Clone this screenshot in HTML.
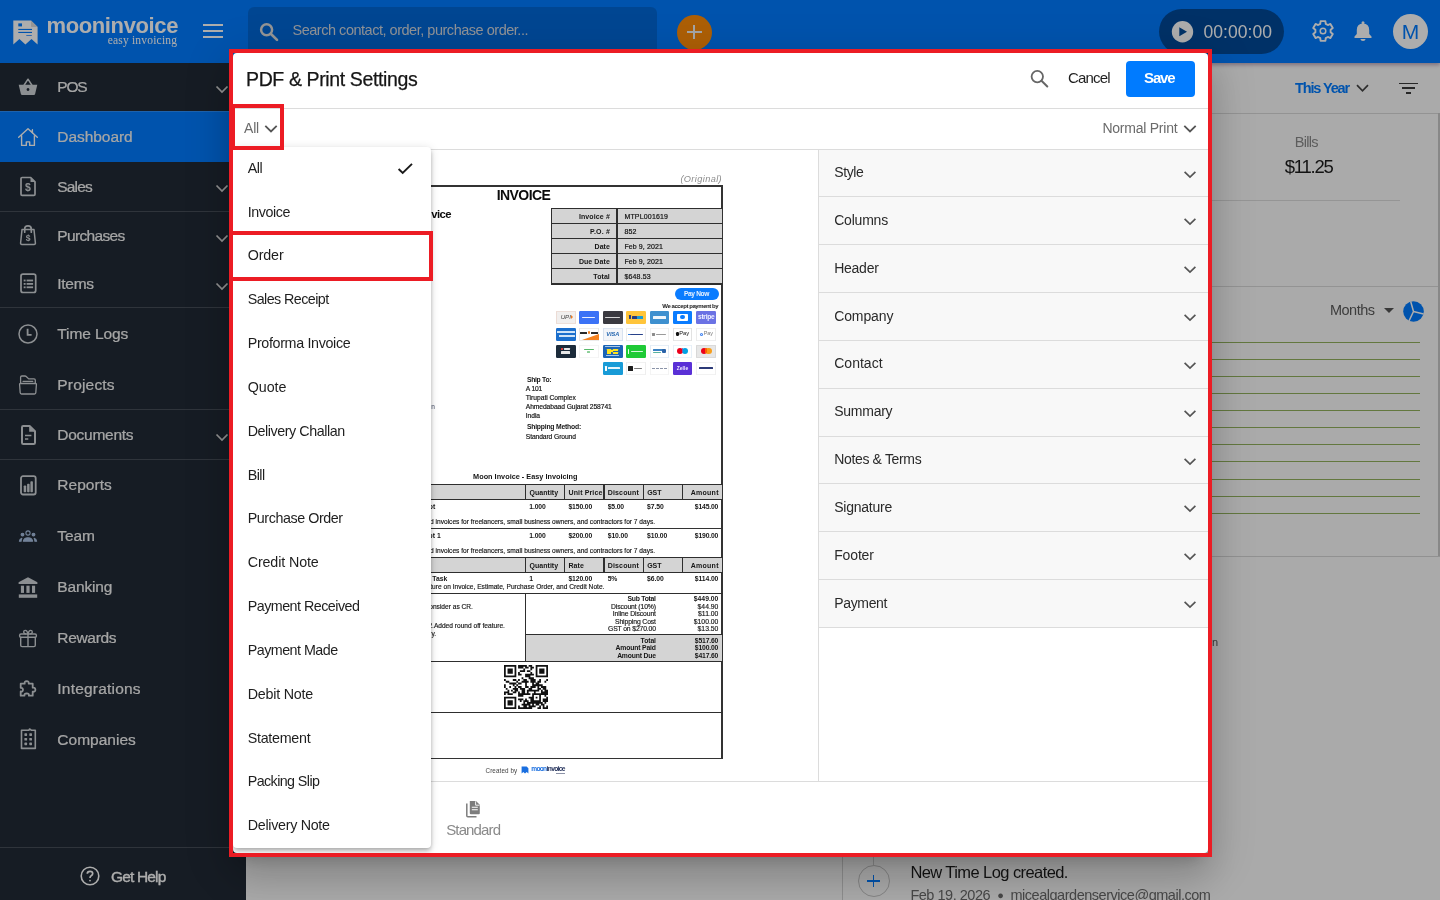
<!DOCTYPE html>
<html><head><meta charset="utf-8"><title>PDF &amp; Print Settings</title>
<style>
html,body{margin:0;padding:0;width:1440px;height:900px;overflow:hidden;background:#fbfbfb;font-family:"Liberation Sans",sans-serif}
.layer{position:absolute;left:0;top:0;width:1440px;height:900px;overflow:hidden;will-change:transform}
.t{position:absolute;white-space:pre;display:block}
</style></head><body>
<div class="layer" id="app" style="z-index:1">
<div style="position:absolute;left:0;top:0;width:1440px;height:63px;background:#007bff;box-shadow:0 2px 4px rgba(60,0,60,.35)"></div>
<svg style="position:absolute;left:12px;top:19px" width="28" height="28" viewBox="12 19 28 28">
<path d="M13.3 20.4 H31 L37.6 27 V44.6 L31.5 39 L25.4 44.6 L19.4 39 L13.3 44.6 Z" fill="#fff"/>
<path d="M31 20.4 L37.6 27 H31.8 Q31 27 31 26.2 Z" fill="#dcdcdc"/>
<rect x="18.3" y="23.4" width="3.7" height="3" fill="#007bff"/>
<rect x="18.3" y="28.9" width="13.7" height="1.1" fill="#007bff"/>
<rect x="18.3" y="31.9" width="13.7" height="1.1" fill="#007bff"/>
<rect x="26.3" y="35" width="5.5" height="1" fill="#4a9bff"/>
</svg>
<span class="t" style="top:15.39px;font:normal 700 22px/1 'Liberation Sans',sans-serif;color:#fff;left:46.50px;letter-spacing:-0.381px;">mooninvoice</span>
<span class="t" style="top:35.20px;font:normal 400 11.5px/1 'Liberation Serif',sans-serif;color:#fff;left:107.70px;letter-spacing:0.196px;">easy invoicing</span>
<div style="position:absolute;left:202.5px;top:23.8px;width:20px;height:2px;background:#fff"></div>
<div style="position:absolute;left:202.5px;top:30px;width:20px;height:2px;background:#fff"></div>
<div style="position:absolute;left:202.5px;top:36.2px;width:20px;height:2px;background:#fff"></div>
<div style="position:absolute;left:248px;top:7px;width:409px;height:48px;border-radius:6px;background:rgba(0,0,0,.155)"></div>
<svg style="position:absolute;left:258px;top:21px" width="22" height="22" viewBox="258 21 22 22">
<circle cx="266.6" cy="29.7" r="5.5" fill="none" stroke="#dcdcdc" stroke-width="2.5"/>
<path d="M271 34 L277 39.900" stroke="#dcdcdc" stroke-width="2.700" stroke-linecap="round"/></svg>
<span class="t" style="top:23.22px;font:normal 400 14.5px/1 'Liberation Sans',sans-serif;color:#d4d8de;left:292.50px;letter-spacing:-0.480px;">Search contact, order, purchase order...</span>
<div style="position:absolute;left:676.5px;top:14.5px;width:35px;height:35px;border-radius:50%;background:#ff8c0a"></div>
<div style="position:absolute;left:687px;top:31px;width:14.5px;height:2px;background:#f4f4f4"></div>
<div style="position:absolute;left:693.2px;top:24.7px;width:2px;height:14.5px;background:#f4f4f4"></div>
<div style="position:absolute;left:1159px;top:9px;width:124.5px;height:45px;border-radius:23px;background:rgba(0,0,0,.4)"></div>
<svg style="position:absolute;left:1171px;top:20px" width="24" height="24" viewBox="1171 20 24 24">
<circle cx="1182.5" cy="31.7" r="10.7" fill="#fff"/><path d="M1179.3 27.2 L1187 31.7 L1179.3 36.2 Z" fill="#004a99"/></svg>
<span class="t" style="top:23.85px;font:normal 400 17.5px/1 'Liberation Sans',sans-serif;color:#fff;left:1203.50px;letter-spacing:0.047px;">00:00:00</span>
<svg style="position:absolute;left:1309px;top:16.900px" width="28" height="28" viewBox="-14 -14 28 28" fill="none" stroke="#fff" stroke-width="1.900" stroke-linejoin="round">
<path d="M2.76 -7.19 L2.38 -9.92 L-2.38 -9.92 L-2.76 -7.19 L-4.85 -5.98 L-7.40 -7.02 L-9.78 -2.90 L-7.61 -1.20 L-7.61 1.20 L-9.78 2.90 L-7.40 7.02 L-4.85 5.98 L-2.76 7.19 L-2.38 9.92 L2.38 9.92 L2.76 7.19 L4.85 5.98 L7.40 7.02 L9.78 2.90 L7.61 1.20 L7.61 -1.20 L9.78 -2.90 L7.40 -7.02 L4.85 -5.98 Z"/><circle r="2.800" stroke-width="1.500"/></svg>
<svg style="position:absolute;left:1351.200px;top:18.900px" width="24" height="24" viewBox="-12 -12 24 24" fill="#fff">
<path d="M-6.200 3 V-1 Q-6.200 -7.200 0 -7.400 Q6.200 -7.200 6.200 -1 V3 L8.500 5.600 V6.900 H-8.500 V5.600 Z"/><circle cx="0" cy="-8.300" r="1.500"/><path d="M-2.600 7.900 H2.600 Q2.300 10 0 10 Q-2.300 10 -2.600 7.900 Z"/></svg>
<div style="position:absolute;left:1393px;top:13.7px;width:35px;height:35px;border-radius:50%;background:#fff"></div>
<span class="t" style="top:21.34px;font:normal 400 21px/1 'Liberation Sans',sans-serif;color:#007bff;left:1401.75px;">M</span>
<div style="position:absolute;left:0;top:63px;width:246px;height:837px;background:#212a35"></div>
<div style="position:absolute;left:0;top:111px;width:246px;height:51px;background:#007bff"></div>
<div style="position:absolute;left:0;top:111px;width:246px;height:1px;background:rgba(255,255,255,.17)"></div>
<div style="position:absolute;left:0;top:210.5px;width:246px;height:1px;background:rgba(255,255,255,.17)"></div>
<div style="position:absolute;left:0;top:307px;width:246px;height:1px;background:rgba(255,255,255,.17)"></div>
<div style="position:absolute;left:0;top:409px;width:246px;height:1px;background:rgba(255,255,255,.17)"></div>
<div style="position:absolute;left:0;top:458.5px;width:246px;height:1px;background:rgba(255,255,255,.17)"></div>
<div style="position:absolute;left:0;top:847px;width:246px;height:1px;background:rgba(255,255,255,.17)"></div>
<span class="t" style="top:79.23px;font:normal 400 15.5px/1 'Liberation Sans',sans-serif;color:#f4f4f4;left:57.30px;letter-spacing:-1.178px;-webkit-text-stroke:.2px #f4f4f4;">POS</span>
<svg style="position:absolute;left:215px;top:85.0px" width="14" height="9" viewBox="0 0 14 9"><path d="M1.5 1.500 L7 7 L12.5 1.500" fill="none" stroke="#d8d8d8" stroke-width="1.7"/></svg>
<span class="t" style="top:129.13px;font:normal 400 15.5px/1 'Liberation Sans',sans-serif;color:#f4f4f4;left:57.30px;letter-spacing:-0.048px;-webkit-text-stroke:.2px #f4f4f4;">Dashboard</span>
<span class="t" style="top:178.63px;font:normal 400 15.5px/1 'Liberation Sans',sans-serif;color:#f4f4f4;left:57.30px;letter-spacing:-0.856px;-webkit-text-stroke:.2px #f4f4f4;">Sales</span>
<svg style="position:absolute;left:215px;top:184.4px" width="14" height="9" viewBox="0 0 14 9"><path d="M1.5 1.500 L7 7 L12.5 1.500" fill="none" stroke="#d8d8d8" stroke-width="1.7"/></svg>
<span class="t" style="top:227.93px;font:normal 400 15.5px/1 'Liberation Sans',sans-serif;color:#f4f4f4;left:57.30px;letter-spacing:-0.670px;-webkit-text-stroke:.2px #f4f4f4;">Purchases</span>
<svg style="position:absolute;left:215px;top:233.7px" width="14" height="9" viewBox="0 0 14 9"><path d="M1.5 1.500 L7 7 L12.5 1.500" fill="none" stroke="#d8d8d8" stroke-width="1.7"/></svg>
<span class="t" style="top:275.83px;font:normal 400 15.5px/1 'Liberation Sans',sans-serif;color:#f4f4f4;left:57.30px;letter-spacing:-0.281px;-webkit-text-stroke:.2px #f4f4f4;">Items</span>
<svg style="position:absolute;left:215px;top:281.6px" width="14" height="9" viewBox="0 0 14 9"><path d="M1.5 1.500 L7 7 L12.5 1.500" fill="none" stroke="#d8d8d8" stroke-width="1.7"/></svg>
<span class="t" style="top:326.43px;font:normal 400 15.5px/1 'Liberation Sans',sans-serif;color:#f4f4f4;left:57.30px;letter-spacing:-0.089px;-webkit-text-stroke:.2px #f4f4f4;">Time Logs</span>
<span class="t" style="top:376.83px;font:normal 400 15.5px/1 'Liberation Sans',sans-serif;color:#f4f4f4;left:57.30px;letter-spacing:0.188px;-webkit-text-stroke:.2px #f4f4f4;">Projects</span>
<span class="t" style="top:426.83px;font:normal 400 15.5px/1 'Liberation Sans',sans-serif;color:#f4f4f4;left:57.30px;letter-spacing:-0.267px;-webkit-text-stroke:.2px #f4f4f4;">Documents</span>
<svg style="position:absolute;left:215px;top:432.6px" width="14" height="9" viewBox="0 0 14 9"><path d="M1.5 1.500 L7 7 L12.5 1.500" fill="none" stroke="#d8d8d8" stroke-width="1.7"/></svg>
<span class="t" style="top:477.43px;font:normal 400 15.5px/1 'Liberation Sans',sans-serif;color:#f4f4f4;left:57.30px;letter-spacing:0.031px;-webkit-text-stroke:.2px #f4f4f4;">Reports</span>
<span class="t" style="top:528.43px;font:normal 400 15.5px/1 'Liberation Sans',sans-serif;color:#f4f4f4;left:57.30px;letter-spacing:-0.102px;-webkit-text-stroke:.2px #f4f4f4;">Team</span>
<span class="t" style="top:579.43px;font:normal 400 15.5px/1 'Liberation Sans',sans-serif;color:#f4f4f4;left:57.30px;letter-spacing:-0.145px;-webkit-text-stroke:.2px #f4f4f4;">Banking</span>
<span class="t" style="top:629.93px;font:normal 400 15.5px/1 'Liberation Sans',sans-serif;color:#f4f4f4;left:57.30px;letter-spacing:-0.310px;-webkit-text-stroke:.2px #f4f4f4;">Rewards</span>
<span class="t" style="top:680.93px;font:normal 400 15.5px/1 'Liberation Sans',sans-serif;color:#f4f4f4;left:57.30px;letter-spacing:0.208px;-webkit-text-stroke:.2px #f4f4f4;">Integrations</span>
<span class="t" style="top:731.93px;font:normal 400 15.5px/1 'Liberation Sans',sans-serif;color:#f4f4f4;left:57.30px;letter-spacing:0.010px;-webkit-text-stroke:.2px #f4f4f4;">Companies</span>
<svg style="position:absolute;left:16px;top:74.50px" width="24" height="24" viewBox="0 0 24 24" fill="none" stroke="#cfd3d7" stroke-width="1.5" stroke-linejoin="round" stroke-linecap="round"><path d="M2.700 9.700 H21.300 L19.100 19 Q18.900 20 17.900 20 H6.100 Q5.100 20 4.900 19 Z M12 13.100 a1.400 1.400 0 1 0 .01 0 Z" fill="#cfd3d7" stroke="none" fill-rule="evenodd"/><path d="M8.200 10 L12 4.200 L15.800 10" stroke-width="1.500"/></svg>
<svg style="position:absolute;left:16px;top:124.60px" width="24" height="24" viewBox="0 0 24 24" fill="none" stroke="#cfd3d7" stroke-width="1.5" stroke-linejoin="round" stroke-linecap="round"><path d="M2.700 12.300 L12 3.700 L21.300 12.300" stroke="#fff" stroke-width="1.4"/><path d="M5.600 10.700 V20.400 H10.300 V16.900 H13.700 V20.400 H18.400 V10.700" stroke="#fff" stroke-width="1.400"/><path d="M15.600 6.900 L16.500 4.500 L16.600 7.900" stroke="#fff" stroke-width="1.100"/></svg>
<svg style="position:absolute;left:16px;top:174.30px" width="24" height="24" viewBox="0 0 24 24" fill="none" stroke="#cfd3d7" stroke-width="1.5" stroke-linejoin="round" stroke-linecap="round"><path d="M5 4.600 Q5 3.500 6.100 3.500 H14.700 L19 7.800 V20.200 Q19 21.300 17.900 21.300 H6.100 Q5 21.300 5 20.200 Z" stroke-width="1.700"/><path d="M14.500 3.700 V8 H18.800 Z" fill="#cfd3d7" stroke="none"/><text x="11.900" y="17.300" text-anchor="middle" font-family="Liberation Sans" font-weight="700" font-size="10.500" fill="#cfd3d7" stroke="none">$</text></svg>
<svg style="position:absolute;left:16px;top:223.40px" width="24" height="24" viewBox="0 0 24 24" fill="none" stroke="#cfd3d7" stroke-width="1.5" stroke-linejoin="round" stroke-linecap="round"><path d="M6 6.600 H18 L19.400 20 Q19.500 21.400 18.100 21.400 H5.900 Q4.500 21.400 4.600 20 Z" stroke-width="1.500"/><path d="M8.700 9.200 V6.200 Q8.700 2.900 12 2.900 Q15.300 2.900 15.300 6.200 V9.200" stroke-width="1.700"/><text x="12.100" y="18.300" text-anchor="middle" font-family="Liberation Sans" font-weight="700" font-size="8.500" fill="#cfd3d7" stroke="none">$</text></svg>
<svg style="position:absolute;left:16px;top:271.20px" width="24" height="24" viewBox="0 0 24 24" fill="none" stroke="#cfd3d7" stroke-width="1.5" stroke-linejoin="round" stroke-linecap="round"><rect x="5" y="3.100" width="14.700" height="18.400" rx="2" stroke-width="1.700"/><g fill="#cfd3d7" stroke="none"><rect x="7.700" y="8.600" width="1.900" height="1.800"/><rect x="10.600" y="8.600" width="6.500" height="1.800"/><rect x="7.700" y="12" width="1.900" height="1.800"/><rect x="10.600" y="12" width="6.500" height="1.800"/><rect x="7.700" y="15.400" width="1.900" height="1.800"/><rect x="10.600" y="15.400" width="6.500" height="1.800"/></g></svg>
<svg style="position:absolute;left:16px;top:321.70px" width="24" height="24" viewBox="0 0 24 24" fill="none" stroke="#cfd3d7" stroke-width="1.5" stroke-linejoin="round" stroke-linecap="round"><circle cx="12" cy="12" r="9" stroke-width="1.500"/><path d="M11.600 6.700 V12.800 H15.600" stroke-width="1.800" stroke-linecap="butt" stroke-linejoin="miter"/></svg>
<svg style="position:absolute;left:16px;top:373.00px" width="24" height="24" viewBox="0 0 24 24" fill="none" stroke="#cfd3d7" stroke-width="1.5" stroke-linejoin="round" stroke-linecap="round"><path d="M4.600 10.300 V4.300 Q4.600 3 5.900 3 H9 Q9.700 3 10.200 3.500 L12.700 5.900 H18 Q19.300 5.900 19.300 7.200 V10.300" stroke-width="1.300"/><path d="M7 8.300 H16.800" stroke-width="1.300"/><path d="M4.500 10.500 H19.500 Q20.500 10.500 20.400 11.500 L19.800 19.800 Q19.700 21 18.500 21 H5.500 Q4.300 21 4.200 19.800 L3.600 11.500 Q3.500 10.500 4.500 10.500 Z" stroke-width="1.300"/></svg>
<svg style="position:absolute;left:16px;top:422.60px" width="24" height="24" viewBox="0 0 24 24" fill="none" stroke="#cfd3d7" stroke-width="1.5" stroke-linejoin="round" stroke-linecap="round"><path d="M6 4.300 Q6 3 7.300 3 H13.600 L19 8.300 V19.700 Q19 21 17.700 21 H7.300 Q6 21 6 19.700 Z" stroke-width="2"/><path d="M13.200 3.300 V8.700 H18.700 Z" fill="#cfd3d7" stroke="none"/><path d="M9 12.500 H15.400 M9 16 H12.300" stroke-width="1.700" stroke-linecap="butt"/></svg>
<svg style="position:absolute;left:16px;top:473.30px" width="24" height="24" viewBox="0 0 24 24" fill="none" stroke="#cfd3d7" stroke-width="1.5" stroke-linejoin="round" stroke-linecap="round"><rect x="5" y="3.200" width="14.700" height="18.300" rx="2" stroke-width="1.800"/><g fill="#cfd3d7" stroke="none"><rect x="7.700" y="12.500" width="2.500" height="6.700" rx=".8"/><rect x="11.100" y="10.800" width="2.500" height="8.400" rx=".8"/><rect x="14.400" y="8.200" width="2.500" height="11" rx=".8"/></g></svg>
<svg style="position:absolute;left:16px;top:524.00px" width="24" height="24" viewBox="0 0 24 24" fill="none" stroke="#cfd3d7" stroke-width="1.5" stroke-linejoin="round" stroke-linecap="round"><g stroke-width="1.100" stroke="#a9c0e2"><circle cx="12" cy="9" r="2.100"/><path d="M7.400 17.200 Q7.900 13.800 12 13.800 Q16.100 13.800 16.600 17.200 Z" fill="#a9c0e2"/><circle cx="6.500" cy="10.600" r="1.400" fill="#a9c0e2"/><circle cx="17.500" cy="10.600" r="1.400" fill="#a9c0e2"/><path d="M3.400 17.200 Q3.600 14.700 5.800 14.200 Q5.200 15.600 5.100 17.200 Z M20.600 17.200 Q20.400 14.700 18.200 14.200 Q18.800 15.600 18.900 17.200 Z" fill="#a9c0e2"/></g></svg>
<svg style="position:absolute;left:16px;top:575.20px" width="24" height="24" viewBox="0 0 24 24" fill="none" stroke="#cfd3d7" stroke-width="1.5" stroke-linejoin="round" stroke-linecap="round"><g fill="#cfd3d7" stroke="none"><path d="M12 2.200 L21.400 7.300 V8.900 H2.600 V7.300 Z"/><rect x="4.900" y="10.700" width="3.100" height="7.200"/><rect x="10.400" y="10.700" width="3.200" height="7.200"/><rect x="16" y="10.700" width="3.100" height="7.200"/><rect x="2.800" y="19.400" width="18.400" height="3.400"/></g></svg>
<svg style="position:absolute;left:16px;top:625.60px" width="24" height="24" viewBox="0 0 24 24" fill="none" stroke="#cfd3d7" stroke-width="1.5" stroke-linejoin="round" stroke-linecap="round"><rect x="3.600" y="8" width="16.800" height="3.300" rx="1.400" stroke-width="1.400"/><path d="M4.700 11.500 V19.200 Q4.700 20.600 6.100 20.600 H17.900 Q19.300 20.600 19.300 19.200 V11.500 M12 8 V20.600" stroke-width="1.400"/><path d="M11.800 7.800 Q11.300 4.300 9.400 4.300 Q7.700 4.300 7.700 6 Q7.700 7.800 9.800 7.800 M12.200 7.800 Q12.700 4.300 14.600 4.300 Q16.300 4.300 16.300 6 Q16.300 7.800 14.200 7.800" stroke-width="1.300"/></svg>
<svg style="position:absolute;left:16px;top:676.50px" width="24" height="24" viewBox="0 0 24 24" fill="none" stroke="#cfd3d7" stroke-width="1.5" stroke-linejoin="round" stroke-linecap="round"><path d="M8.700 6.700 Q8.200 4.200 10.700 4.100 Q13.100 4.200 12.700 6.700 H16.700 V10.700 Q19.300 10.200 19.400 12.700 Q19.300 15.100 16.700 14.700 V18.700 H12.900 Q13.200 16.400 10.700 16.300 Q8.200 16.400 8.500 18.700 H4.700 V14.500 Q6.900 14.800 7 12.700 Q6.900 10.600 4.700 10.900 V6.700 Z" stroke-width="1.800"/></svg>
<svg style="position:absolute;left:16px;top:727.40px" width="24" height="24" viewBox="0 0 24 24" fill="none" stroke="#cfd3d7" stroke-width="1.5" stroke-linejoin="round" stroke-linecap="round"><path d="M5.500 3.300 H12.800 L13.600 2 L15.600 3.300 H19.300 V21.400 H5.500 Z" stroke-width="1.600"/><g fill="#cfd3d7" stroke="none"><rect x="8.400" y="6.300" width="2.700" height="2.600" rx=".6"/><rect x="13.300" y="6.300" width="2.700" height="2.600" rx=".6"/><rect x="8.400" y="11" width="2.700" height="2.600" rx=".6"/><rect x="13.300" y="11" width="2.700" height="2.600" rx=".6"/><rect x="8.400" y="15.600" width="2.700" height="2.600" rx=".6"/><rect x="13.300" y="15.600" width="2.700" height="2.600" rx=".6"/></g></svg>
<svg style="position:absolute;left:78px;top:864px" width="24" height="24" viewBox="0 0 24 24" fill="none" stroke="#fff" stroke-width="1.600"><circle cx="12" cy="12" r="8.800"/><path d="M9.300 9.800 Q9.300 7.400 12 7.400 Q14.700 7.400 14.700 9.600 Q14.700 11 13.200 11.800 Q12 12.500 12 13.900" stroke-width="1.700"/><circle cx="12" cy="16.600" r=".9" fill="#fff" stroke="none"/></svg>
<span class="t" style="top:868.73px;font:normal 400 15.5px/1 'Liberation Sans',sans-serif;color:#fff;left:111.00px;letter-spacing:-0.834px;-webkit-text-stroke:.35px #fff;">Get Help</span>
<div style="position:absolute;left:246px;top:63px;width:1194px;height:837px;background:#fbfbfb;z-index:-1"></div>
<span class="t" style="top:81.12px;font:normal 700 14.5px/1 'Liberation Sans',sans-serif;color:#007bff;left:1295.00px;letter-spacing:-1.135px;">This Year</span>
<svg style="position:absolute;left:1356px;top:84px" width="13" height="9" viewBox="0 0 13 9"><path d="M1 1.200 L6.500 6.800 L12 1.200" fill="none" stroke="#444" stroke-width="1.700"/></svg>
<div style="position:absolute;left:1399px;top:82.5px;width:18.5px;height:1.7px;background:#3a3a3a"></div>
<div style="position:absolute;left:1402px;top:87.3px;width:12.5px;height:1.7px;background:#3a3a3a"></div>
<div style="position:absolute;left:1405.7px;top:92px;width:5px;height:1.7px;background:#3a3a3a"></div>
<div style="position:absolute;left:246px;top:113px;width:1193px;height:174px;border:1px solid #d9d9d9;border-left:0;box-sizing:border-box"></div>
<div style="position:absolute;left:1438px;top:113px;width:2px;height:443px;background:#c9c9c9"></div>
<span class="t" style="top:134.72px;font:normal 400 14.5px/1 'Liberation Sans',sans-serif;color:#8a8a8a;left:1294.84px;letter-spacing:-0.719px;">Bills</span>
<span class="t" style="top:157.56px;font:normal 400 18.5px/1 'Liberation Sans',sans-serif;color:#1d1d1d;left:1284.69px;letter-spacing:-1.200px;">$11.25</span>
<div style="position:absolute;left:1000px;top:200px;width:400px;height:1px;background:#dcdcdc"></div>
<span class="t" style="top:303.12px;font:normal 400 14.5px/1 'Liberation Sans',sans-serif;color:#5a5a5a;left:1330.00px;letter-spacing:-0.510px;">Months</span>
<svg style="position:absolute;left:1383px;top:307px" width="12" height="7" viewBox="0 0 12 7"><path d="M1 1 H11 L6 6 Z" fill="#555"/></svg>
<svg style="position:absolute;left:1402px;top:299.500px" width="23" height="23" viewBox="-11.500 -11.500 23 23"><circle r="10.300" fill="#007bff"/><path d="M0 0 L-2.800 -10 M0 0 L10 2.600 M0 0 L-4.500 9.400" stroke="#fff" stroke-width="1.500"/></svg>
<div style="position:absolute;left:1000px;top:342px;width:420px;height:1px;background:#92b25e"></div>
<div style="position:absolute;left:1000px;top:359px;width:420px;height:1px;background:#92b25e"></div>
<div style="position:absolute;left:1000px;top:376px;width:420px;height:1px;background:#92b25e"></div>
<div style="position:absolute;left:1000px;top:393px;width:420px;height:1px;background:#92b25e"></div>
<div style="position:absolute;left:1000px;top:410px;width:420px;height:1px;background:#92b25e"></div>
<div style="position:absolute;left:1000px;top:427px;width:420px;height:1px;background:#92b25e"></div>
<div style="position:absolute;left:1000px;top:444px;width:420px;height:1px;background:#92b25e"></div>
<div style="position:absolute;left:1000px;top:461px;width:420px;height:1px;background:#92b25e"></div>
<div style="position:absolute;left:1000px;top:479px;width:420px;height:1px;background:#92b25e"></div>
<div style="position:absolute;left:1000px;top:496px;width:420px;height:1px;background:#92b25e"></div>
<div style="position:absolute;left:1000px;top:513px;width:420px;height:1px;background:#92b25e"></div>
<div style="position:absolute;left:246px;top:555.500px;width:1194px;height:1px;background:#d6d6d6"></div>
<div style="position:absolute;left:842px;top:556px;width:1px;height:344px;background:#d2d2d2"></div>
<div style="position:absolute;left:873px;top:840px;width:1px;height:25px;background:#cfcfcf"></div>
<div style="position:absolute;left:857.500px;top:864.500px;width:32px;height:32px;border-radius:50%;border:1px solid #c4c4c4;box-sizing:border-box;background:#fbfbfb"></div>
<div style="position:absolute;left:867.300px;top:880px;width:12.500px;height:1.700px;background:#007bff"></div><div style="position:absolute;left:872.700px;top:874.600px;width:1.700px;height:12.500px;background:#007bff"></div>
<span class="t" style="top:863.74px;font:normal 400 16.5px/1 'Liberation Sans',sans-serif;color:#1c1c1c;left:910.40px;letter-spacing:-0.580px;">New Time Log created.</span>
<span class="t" style="top:888.22px;font:normal 400 14.5px/1 'Liberation Sans',sans-serif;color:#6a6a6a;left:910.40px;letter-spacing:-0.478px;">Feb 19, 2026 &nbsp;<span style="font-size:11px;position:relative;top:-1.500px">&#9679;</span>&nbsp; micealgardenservice@gmail.com</span>
<span class="t" style="top:636.63px;font:normal 400 11px/1 'Liberation Sans',sans-serif;color:#555;left:1212.00px;">n</span>
</div>
<div class="layer" id="dim" style="z-index:2;background:rgba(0,0,0,.32)"></div>
<div class="layer" id="dialog" style="z-index:3">
<div style="position:absolute;left:233px;top:53px;width:975px;height:800px;border-radius:4px;background:#fff;box-shadow:0 11px 15px -7px rgba(0,0,0,.2),0 24px 38px 3px rgba(0,0,0,.14),0 9px 46px 8px rgba(0,0,0,.12)"></div>
<span class="t" style="top:69.97px;font:normal 400 19.5px/1 'Liberation Sans',sans-serif;color:#161616;left:246.00px;letter-spacing:-0.376px;-webkit-text-stroke:.25px #161616;">PDF &amp; Print Settings</span>
<svg style="position:absolute;left:1028px;top:67px" width="22" height="22" viewBox="1028 67 22 22">
<circle cx="1037.300" cy="76.600" r="5.700" fill="none" stroke="#666" stroke-width="1.800"/><path d="M1041.500 80.800 L1047.300 86.500" stroke="#666" stroke-width="2" stroke-linecap="round"/></svg>
<span class="t" style="top:70.17px;font:normal 400 15px/1 'Liberation Sans',sans-serif;color:#1f1f1f;left:1068.00px;letter-spacing:-0.834px;">Cancel</span>
<div style="position:absolute;left:1125.500px;top:60.700px;width:69px;height:36px;border-radius:4px;background:#007bff"></div>
<span class="t" style="top:70.27px;font:normal 700 15px/1 'Liberation Sans',sans-serif;color:#fff;left:1144.08px;letter-spacing:-1.200px;">Save</span>
<div style="position:absolute;left:233px;top:107.800px;width:975px;height:1px;background:#dcdcdc"></div>
<span class="t" style="top:120.86px;font:normal 400 14px/1 'Liberation Sans',sans-serif;color:#6b6b6b;left:244.00px;letter-spacing:-0.188px;">All</span>
<svg style="position:absolute;left:264px;top:124px" width="14" height="10" viewBox="0 0 14 10"><path d="M1.300 1.800 L7 7.500 L12.700 1.800" fill="none" stroke="#555" stroke-width="1.800"/></svg>
<span class="t" style="top:120.86px;font:normal 400 14px/1 'Liberation Sans',sans-serif;color:#6b6b6b;left:1102.40px;letter-spacing:-0.233px;">Normal Print</span>
<svg style="position:absolute;left:1182.700px;top:124px" width="14" height="10" viewBox="0 0 14 10"><path d="M1.300 1.800 L7 7.500 L12.700 1.800" fill="none" stroke="#555" stroke-width="1.800"/></svg>
<div style="position:absolute;left:233px;top:148.600px;width:975px;height:1px;background:#dcdcdc"></div>
<div style="position:absolute;left:818.300px;top:149px;width:1px;height:633px;background:#dcdcdc"></div>
<div style="position:absolute;left:233px;top:781px;width:975px;height:1px;background:#dcdcdc"></div>
<div style="position:absolute;left:819.300px;top:149.60px;width:388.700px;height:46.83px;background:#f8f8f8"></div>
<div style="position:absolute;left:819.300px;top:196.43px;width:388.700px;height:1px;background:#dcdcdc"></div>
<span class="t" style="top:165.06px;font:normal 400 14px/1 'Liberation Sans',sans-serif;color:#2a2a2a;left:834.20px;letter-spacing:-0.365px;">Style</span>
<svg style="position:absolute;left:1183.400px;top:169.60px" width="14" height="10" viewBox="0 0 14 10"><path d="M1.600 1.800 L7 7 L12.400 1.800" fill="none" stroke="#555" stroke-width="1.700"/></svg>
<div style="position:absolute;left:819.300px;top:197.43px;width:388.700px;height:46.83px;background:#f8f8f8"></div>
<div style="position:absolute;left:819.300px;top:244.26px;width:388.700px;height:1px;background:#dcdcdc"></div>
<span class="t" style="top:212.89px;font:normal 400 14px/1 'Liberation Sans',sans-serif;color:#2a2a2a;left:834.20px;letter-spacing:-0.207px;">Columns</span>
<svg style="position:absolute;left:1183.400px;top:217.43px" width="14" height="10" viewBox="0 0 14 10"><path d="M1.600 1.800 L7 7 L12.400 1.800" fill="none" stroke="#555" stroke-width="1.700"/></svg>
<div style="position:absolute;left:819.300px;top:245.26px;width:388.700px;height:46.83px;background:#f8f8f8"></div>
<div style="position:absolute;left:819.300px;top:292.09px;width:388.700px;height:1px;background:#dcdcdc"></div>
<span class="t" style="top:260.72px;font:normal 400 14px/1 'Liberation Sans',sans-serif;color:#2a2a2a;left:834.20px;letter-spacing:-0.254px;">Header</span>
<svg style="position:absolute;left:1183.400px;top:265.26px" width="14" height="10" viewBox="0 0 14 10"><path d="M1.600 1.800 L7 7 L12.400 1.800" fill="none" stroke="#555" stroke-width="1.700"/></svg>
<div style="position:absolute;left:819.300px;top:293.09px;width:388.700px;height:46.83px;background:#f8f8f8"></div>
<div style="position:absolute;left:819.300px;top:339.92px;width:388.700px;height:1px;background:#dcdcdc"></div>
<span class="t" style="top:308.55px;font:normal 400 14px/1 'Liberation Sans',sans-serif;color:#2a2a2a;left:834.20px;letter-spacing:-0.117px;">Company</span>
<svg style="position:absolute;left:1183.400px;top:313.09px" width="14" height="10" viewBox="0 0 14 10"><path d="M1.600 1.800 L7 7 L12.400 1.800" fill="none" stroke="#555" stroke-width="1.700"/></svg>
<div style="position:absolute;left:819.300px;top:340.92px;width:388.700px;height:46.83px;background:#f8f8f8"></div>
<div style="position:absolute;left:819.300px;top:387.75px;width:388.700px;height:1px;background:#dcdcdc"></div>
<span class="t" style="top:356.38px;font:normal 400 14px/1 'Liberation Sans',sans-serif;color:#2a2a2a;left:834.20px;letter-spacing:0.021px;">Contact</span>
<svg style="position:absolute;left:1183.400px;top:360.92px" width="14" height="10" viewBox="0 0 14 10"><path d="M1.600 1.800 L7 7 L12.400 1.800" fill="none" stroke="#555" stroke-width="1.700"/></svg>
<div style="position:absolute;left:819.300px;top:388.75px;width:388.700px;height:46.83px;background:#f8f8f8"></div>
<div style="position:absolute;left:819.300px;top:435.58px;width:388.700px;height:1px;background:#dcdcdc"></div>
<span class="t" style="top:404.21px;font:normal 400 14px/1 'Liberation Sans',sans-serif;color:#2a2a2a;left:834.20px;letter-spacing:-0.244px;">Summary</span>
<svg style="position:absolute;left:1183.400px;top:408.75px" width="14" height="10" viewBox="0 0 14 10"><path d="M1.600 1.800 L7 7 L12.400 1.800" fill="none" stroke="#555" stroke-width="1.700"/></svg>
<div style="position:absolute;left:819.300px;top:436.58px;width:388.700px;height:46.83px;background:#f8f8f8"></div>
<div style="position:absolute;left:819.300px;top:483.41px;width:388.700px;height:1px;background:#dcdcdc"></div>
<span class="t" style="top:452.04px;font:normal 400 14px/1 'Liberation Sans',sans-serif;color:#2a2a2a;left:834.20px;letter-spacing:-0.342px;">Notes &amp; Terms</span>
<svg style="position:absolute;left:1183.400px;top:456.58px" width="14" height="10" viewBox="0 0 14 10"><path d="M1.600 1.800 L7 7 L12.400 1.800" fill="none" stroke="#555" stroke-width="1.700"/></svg>
<div style="position:absolute;left:819.300px;top:484.41px;width:388.700px;height:46.83px;background:#f8f8f8"></div>
<div style="position:absolute;left:819.300px;top:531.24px;width:388.700px;height:1px;background:#dcdcdc"></div>
<span class="t" style="top:499.87px;font:normal 400 14px/1 'Liberation Sans',sans-serif;color:#2a2a2a;left:834.20px;letter-spacing:-0.238px;">Signature</span>
<svg style="position:absolute;left:1183.400px;top:504.41px" width="14" height="10" viewBox="0 0 14 10"><path d="M1.600 1.800 L7 7 L12.400 1.800" fill="none" stroke="#555" stroke-width="1.700"/></svg>
<div style="position:absolute;left:819.300px;top:532.24px;width:388.700px;height:46.83px;background:#f8f8f8"></div>
<div style="position:absolute;left:819.300px;top:579.07px;width:388.700px;height:1px;background:#dcdcdc"></div>
<span class="t" style="top:547.70px;font:normal 400 14px/1 'Liberation Sans',sans-serif;color:#2a2a2a;left:834.20px;letter-spacing:-0.145px;">Footer</span>
<svg style="position:absolute;left:1183.400px;top:552.24px" width="14" height="10" viewBox="0 0 14 10"><path d="M1.600 1.800 L7 7 L12.400 1.800" fill="none" stroke="#555" stroke-width="1.700"/></svg>
<div style="position:absolute;left:819.300px;top:580.07px;width:388.700px;height:46.83px;background:#f8f8f8"></div>
<div style="position:absolute;left:819.300px;top:626.90px;width:388.700px;height:1px;background:#dcdcdc"></div>
<span class="t" style="top:595.53px;font:normal 400 14px/1 'Liberation Sans',sans-serif;color:#2a2a2a;left:834.20px;letter-spacing:-0.336px;">Payment</span>
<svg style="position:absolute;left:1183.400px;top:600.07px" width="14" height="10" viewBox="0 0 14 10"><path d="M1.600 1.800 L7 7 L12.400 1.800" fill="none" stroke="#555" stroke-width="1.700"/></svg>
<svg style="position:absolute;left:465px;top:800px" width="16" height="18" viewBox="0 0 16 18" fill="none">
<path d="M1.800 3.500 V15.800 Q1.800 16.800 2.800 16.800 H11.500" stroke="#7d7d7d" stroke-width="1.500"/>
<path d="M4.800 1 H11 L14.800 4.800 V13.200 Q14.800 14.200 13.800 14.200 H5.800 Q4.800 14.200 4.800 13.200 Z" fill="#7d7d7d"/>
<path d="M6.800 7.200 H12.800 M6.800 9.800 H12.800" stroke="#fff" stroke-width="1.100"/><path d="M10.600 1.300 V5.200 H14.500" stroke="#fff" stroke-width=".9"/></svg>
<span class="t" style="top:821.97px;font:normal 400 15px/1 'Liberation Sans',sans-serif;color:#8a8a8a;left:446.20px;letter-spacing:-0.861px;">Standard</span>
<span class="t" style="top:175.41px;font:italic 400 9.2px/1 'Liberation Sans',sans-serif;color:#8c8c8c;left:680.39px;letter-spacing:0.392px;">(Original)</span>
<div style="position:absolute;left:300px;top:185.35px;width:422.70px;height:1.3px;background:#333"></div>
<div style="position:absolute;left:721.45px;top:186px;width:1.3px;height:573.00px;background:#333"></div>
<div style="position:absolute;left:300px;top:757.85px;width:422.70px;height:1.3px;background:#333"></div>
<span class="t" style="top:188.26px;font:normal 700 14px/1 'Liberation Sans',sans-serif;color:#0c0c0c;left:496.70px;letter-spacing:-0.554px;">INVOICE</span>
<span class="t" style="top:209.17px;font:normal 700 11.3px/1 'Liberation Sans',sans-serif;color:#0c0c0c;left:431.30px;letter-spacing:-0.550px;">vice</span>
<div style="position:absolute;left:551.3px;top:208.5px;width:170.70px;height:75.50px;background:#d4d4d4"></div>
<div style="position:absolute;left:550.7px;top:207.88px;width:172.00px;height:1.25px;background:#2e2e2e"></div>
<div style="position:absolute;left:550.7px;top:223.07px;width:172.00px;height:1.25px;background:#2e2e2e"></div>
<div style="position:absolute;left:550.7px;top:238.18px;width:172.00px;height:1.25px;background:#2e2e2e"></div>
<div style="position:absolute;left:550.7px;top:253.18px;width:172.00px;height:1.25px;background:#2e2e2e"></div>
<div style="position:absolute;left:550.7px;top:268.18px;width:172.00px;height:1.25px;background:#2e2e2e"></div>
<div style="position:absolute;left:550.7px;top:283.38px;width:172.00px;height:1.25px;background:#2e2e2e"></div>
<div style="position:absolute;left:550.67px;top:208.5px;width:1.25px;height:75.50px;background:#2e2e2e"></div>
<div style="position:absolute;left:616.38px;top:208.5px;width:1.25px;height:75.50px;background:#2e2e2e"></div>
<span class="t" style="top:213.48px;font:normal 700 7px/1 'Liberation Sans',sans-serif;color:#151515;left:578.91px;letter-spacing:0.115px;">Invoice #</span>
<span class="t" style="top:213.48px;font:normal 400 7px/1 'Liberation Sans',sans-serif;color:#151515;left:624.40px;letter-spacing:0.177px;-webkit-text-stroke:.2px #151515;">MTPL001619</span>
<span class="t" style="top:228.43px;font:normal 700 7px/1 'Liberation Sans',sans-serif;color:#151515;left:589.97px;letter-spacing:0.174px;">P.O. #</span>
<span class="t" style="top:228.43px;font:normal 400 7px/1 'Liberation Sans',sans-serif;color:#151515;left:624.40px;letter-spacing:0.204px;-webkit-text-stroke:.2px #151515;">852</span>
<span class="t" style="top:243.38px;font:normal 700 7px/1 'Liberation Sans',sans-serif;color:#151515;left:594.60px;letter-spacing:0.003px;">Date</span>
<span class="t" style="top:243.38px;font:normal 400 7px/1 'Liberation Sans',sans-serif;color:#151515;left:624.40px;letter-spacing:0.102px;-webkit-text-stroke:.2px #151515;">Feb 9, 2021</span>
<span class="t" style="top:258.33px;font:normal 700 7px/1 'Liberation Sans',sans-serif;color:#151515;left:578.88px;letter-spacing:0.082px;">Due Date</span>
<span class="t" style="top:258.33px;font:normal 400 7px/1 'Liberation Sans',sans-serif;color:#151515;left:624.40px;letter-spacing:0.102px;-webkit-text-stroke:.2px #151515;">Feb 9, 2021</span>
<span class="t" style="top:273.28px;font:normal 700 7px/1 'Liberation Sans',sans-serif;color:#151515;left:593.36px;letter-spacing:0.059px;">Total</span>
<span class="t" style="top:273.28px;font:normal 400 7px/1 'Liberation Sans',sans-serif;color:#151515;left:624.40px;letter-spacing:0.170px;-webkit-text-stroke:.2px #151515;">$648.53</span>
<div style="position:absolute;left:674.700px;top:288px;width:44px;height:12px;border-radius:6px;background:#0a7cff"></div>
<span class="t" style="top:291.48px;font:normal 700 6.6px/1 'Liberation Sans',sans-serif;color:#e8f2ff;left:684.02px;letter-spacing:-0.355px;">Pay Now</span>
<span class="t" style="top:302.97px;font:normal 700 6px/1 'Liberation Sans',sans-serif;color:#1a1a1a;left:662.27px;letter-spacing:-0.430px;">We accept payment by</span>
<div style="position:absolute;left:555.9px;top:311.1px;width:19.800px;height:12.600px;border-radius:1.200px;background:#f1efee;box-shadow:inset 0 0 0 .6px #e9cfc4;overflow:hidden"><div style="position:absolute;left:0;top:3.1px;width:19.800px;text-align:center;font:italic 400 6.2px/1 'Liberation Sans',sans-serif;color:#4a4a4a;letter-spacing:0px;white-space:nowrap">UPI</div><div style="position:absolute;left:15.300px;top:4.200px;border-left:2.400px solid #ee7b22;border-top:2.100px solid transparent;border-bottom:2.100px solid transparent"></div></div>
<div style="position:absolute;left:579px;top:311.1px;width:19.800px;height:12.600px;border-radius:1.200px;background:#3b72f6;overflow:hidden"><div style="position:absolute;left:3.4px;top:5.6px;width:13px;height:1.5px;background:#e9f0ff;border-radius:0.6px"></div></div>
<div style="position:absolute;left:602.8px;top:311.1px;width:19.800px;height:12.600px;border-radius:1.200px;background:#3b3a40;overflow:hidden"><div style="position:absolute;left:2.4px;top:5.7px;width:15px;height:1.4px;background:#d8d8d8;border-radius:0.6px"></div></div>
<div style="position:absolute;left:625.8px;top:311.1px;width:19.800px;height:12.600px;border-radius:1.200px;background:#ffc53b;overflow:hidden"><div style="position:absolute;left:2.8px;top:4.2px;width:2px;height:4.2px;background:#253b80;border-radius:0.4px"></div><div style="position:absolute;left:5.8px;top:5.3px;width:5.5px;height:2.2px;background:#253b80;border-radius:0.5px"></div><div style="position:absolute;left:11.6px;top:5.3px;width:5.3px;height:2.2px;background:#179bd7;border-radius:0.5px"></div></div>
<div style="position:absolute;left:649.6px;top:311.1px;width:19.800px;height:12.600px;border-radius:1.200px;background:#3e90cf;overflow:hidden"><div style="position:absolute;left:3px;top:4.7px;width:13.8px;height:3.3px;background:#eef6fc;border-radius:0.6px"></div></div>
<div style="position:absolute;left:672.6px;top:311.1px;width:19.800px;height:12.600px;border-radius:1.200px;background:#0a7cff;overflow:hidden"><div style="position:absolute;left:4.8px;top:2.9px;width:10.2px;height:6.8px;background:#fff;border-radius:0.8px"></div><div style="position:absolute;left:7.7px;top:4.3px;width:4.4px;height:4px;background:#0a7cff;border-radius:2.2px"></div></div>
<div style="position:absolute;left:696.3px;top:311.1px;width:19.800px;height:12.600px;border-radius:1.200px;background:#6b72e4;overflow:hidden"><div style="position:absolute;left:0;top:2.5px;width:19.800px;text-align:center;font:normal 700 6.6px/1 'Liberation Sans',sans-serif;color:#f0f0ff;letter-spacing:-0.3px;white-space:nowrap">stripe</div></div>
<div style="position:absolute;left:555.9px;top:328px;width:19.800px;height:12.600px;border-radius:1.200px;background:#1b6fcd;overflow:hidden"><div style="position:absolute;left:1px;top:3.2px;width:17.8px;height:1.9px;background:#cfe4f8;border-radius:0.3px"></div><div style="position:absolute;left:3.4px;top:6.8px;width:15.4px;height:1.9px;background:#cfe4f8;border-radius:0.3px"></div></div>
<div style="position:absolute;left:579px;top:328px;width:19.800px;height:12.600px;border-radius:1.200px;background:#fff;box-shadow:inset 0 0 0 .6px #d9d9d9;overflow:hidden"><div style="position:absolute;left:1px;top:3.6px;width:7.4px;height:2px;background:#2a2a2a;border-radius:0.3px"></div><div style="position:absolute;left:8.7px;top:3.2px;width:2.6px;height:2.6px;background:#f58220;border-radius:1.3px"></div><div style="position:absolute;left:11.6px;top:3.6px;width:7px;height:2px;background:#2a2a2a;border-radius:0.3px"></div><div style="position:absolute;left:3px;top:6.300px;border-right:17px solid #f58220;border-top:6.400px solid transparent"></div></div>
<div style="position:absolute;left:602.8px;top:328px;width:19.800px;height:12.600px;border-radius:1.200px;background:#f3f5f9;box-shadow:inset 0 0 0 .6px #c7d5e8;overflow:hidden"><div style="position:absolute;left:0;top:3.5px;width:19.800px;text-align:center;font:italic 700 5.6px/1 'Liberation Sans',sans-serif;color:#2566af;letter-spacing:0px;white-space:nowrap">VISA</div></div>
<div style="position:absolute;left:625.8px;top:328px;width:19.800px;height:12.600px;border-radius:1.200px;background:#fff;box-shadow:inset 0 0 0 .6px #e0e0e0;overflow:hidden"><div style="position:absolute;left:1.8px;top:5.7px;width:2px;height:1.4px;background:#2f7be0;border-radius:0.2px"></div><div style="position:absolute;left:4.2px;top:5.5px;width:13.5px;height:1.6px;background:#27418a;border-radius:0.5px"></div></div>
<div style="position:absolute;left:649.6px;top:328px;width:19.800px;height:12.600px;border-radius:1.200px;background:#fff;box-shadow:inset 0 0 0 .6px #e6e6e6;overflow:hidden"><div style="position:absolute;left:2.6px;top:5px;width:2.6px;height:2.6px;background:#8b8b8b;border-radius:0.4px"></div><div style="position:absolute;left:6.2px;top:5.7px;width:10.5px;height:1.3px;background:#9b9b9b;border-radius:0.5px"></div></div>
<div style="position:absolute;left:672.6px;top:328px;width:19.800px;height:12.600px;border-radius:1.200px;background:#fff;box-shadow:inset 0 0 0 .6px #cfcfcf;overflow:hidden"><div style="position:absolute;left:3px;top:4.4px;width:3px;height:3.6px;background:#111;border-radius:1.2px"></div><div style="position:absolute;left:0;top:3.2px;width:19.800px;text-align:left;padding-left:6.600px;font:normal 400 5.8px/1 'Liberation Sans',sans-serif;color:#111;letter-spacing:0px;white-space:nowrap">Pay</div></div>
<div style="position:absolute;left:696.3px;top:328px;width:19.800px;height:12.600px;border-radius:1.200px;background:#fff;box-shadow:inset 0 0 0 .6px #e0e0e0;overflow:hidden"><div style="position:absolute;left:3.3px;top:4.6px;width:3.3px;height:3.3px;background:#4285f4;border-radius:1.7px"></div><div style="position:absolute;left:4.3px;top:5.6px;width:1.4px;height:1.4px;background:#fff;border-radius:0.7px"></div><div style="position:absolute;left:0;top:3.4px;width:19.800px;text-align:left;padding-left:7.400px;font:normal 400 5.4px/1 'Liberation Sans',sans-serif;color:#777;letter-spacing:0px;white-space:nowrap">Pay</div></div>
<div style="position:absolute;left:555.9px;top:345.1px;width:19.800px;height:12.600px;border-radius:1.200px;background:#1c2b3a;overflow:hidden"><div style="position:absolute;left:5.2px;top:2.8px;width:2.4px;height:2.4px;background:#e23b3b;border-radius:0.3px"></div><div style="position:absolute;left:8.6px;top:3.2px;width:5.8px;height:1.6px;background:#e8e8e8;border-radius:0.4px"></div><div style="position:absolute;left:5.2px;top:6.4px;width:9.4px;height:2.6px;background:#e8e8e8;border-radius:0.6px"></div></div>
<div style="position:absolute;left:579px;top:345.1px;width:19.800px;height:12.600px;border-radius:1.200px;background:#fff;box-shadow:inset 0 0 0 .6px #ebebeb;overflow:hidden"><div style="position:absolute;left:5.4px;top:4px;width:9.2px;height:1.3px;background:#58b86a;border-radius:0.5px"></div><div style="position:absolute;left:8.4px;top:6.4px;width:3px;height:1.5px;background:#8ccf98;border-radius:0.5px"></div></div>
<div style="position:absolute;left:602.8px;top:345.1px;width:19.800px;height:12.600px;border-radius:1.200px;background:#1c64b5;overflow:hidden"><div style="position:absolute;left:2.5px;top:1px;width:14.5px;height:1.2px;background:#a9c8ea;border-radius:0.3px"></div><div style="position:absolute;left:4.6px;top:3.9px;width:3.2px;height:4.6px;background:#ffe21f;border-radius:0.2px"></div><div style="position:absolute;left:7.8px;top:5.2px;width:2.8px;height:2px;background:#ffe21f;border-radius:0px"></div><div style="position:absolute;left:10.6px;top:3.9px;width:4.4px;height:1.8px;background:#ffe21f;border-radius:0.2px"></div><div style="position:absolute;left:10.6px;top:6.7px;width:4.4px;height:1.8px;background:#ffe21f;border-radius:0.2px"></div><div style="position:absolute;left:3.5px;top:10.3px;width:12.5px;height:1.1px;background:#a9c8ea;border-radius:0.3px"></div></div>
<div style="position:absolute;left:625.8px;top:345.1px;width:19.800px;height:12.600px;border-radius:1.200px;background:#1fca36;overflow:hidden"><div style="position:absolute;left:2.2px;top:4.3px;width:1.5px;height:4.2px;background:#eafff0;border-radius:0.5px"></div><div style="position:absolute;left:5.2px;top:5.5px;width:12.2px;height:1.8px;background:#d6f8dc;border-radius:0.6px"></div></div>
<div style="position:absolute;left:649.6px;top:345.1px;width:19.800px;height:12.600px;border-radius:1.200px;background:#fff;box-shadow:inset 0 0 0 .6px #cfe0f0;overflow:hidden"><div style="position:absolute;left:3.6px;top:4.3px;width:10px;height:1.3px;background:#3b83c4;border-radius:0.5px"></div><div style="position:absolute;left:3.6px;top:6.8px;width:8px;height:1.3px;background:#58b3a0;border-radius:0.5px"></div><div style="position:absolute;left:12.8px;top:4px;width:3.2px;height:4.4px;background:#2b63a8;border-radius:1px"></div></div>
<div style="position:absolute;left:672.6px;top:345.1px;width:19.800px;height:12.600px;border-radius:1.200px;background:#fff;box-shadow:inset 0 0 0 .6px #d8e6f3;overflow:hidden"><div style="position:absolute;left:4.3px;top:2.6px;width:6.4px;height:6.4px;background:#eb001b;border-radius:3.2px"></div><div style="position:absolute;left:9.1px;top:2.6px;width:6.4px;height:6.4px;background:#00a2e5;border-radius:3.2px"></div><div style="position:absolute;left:9.1px;top:3.4px;width:1.6px;height:4.8px;background:#6c6bbd;border-radius:0.8px"></div></div>
<div style="position:absolute;left:696.3px;top:345.1px;width:19.800px;height:12.600px;border-radius:1.200px;background:#e7e7e7;box-shadow:inset 0 0 0 .6px #cfcfcf;overflow:hidden"><div style="position:absolute;left:4.3px;top:2.6px;width:6.4px;height:6.4px;background:#eb001b;border-radius:3.2px"></div><div style="position:absolute;left:9.1px;top:2.6px;width:6.4px;height:6.4px;background:#f79e1b;border-radius:3.2px"></div><div style="position:absolute;left:9.1px;top:3.4px;width:1.6px;height:4.8px;background:#ff5f00;border-radius:0.8px"></div></div>
<div style="position:absolute;left:602.8px;top:362px;width:19.800px;height:12.600px;border-radius:1.200px;background:#189bd7;overflow:hidden"><div style="position:absolute;left:2.6px;top:4px;width:1.8px;height:4.6px;background:#fff;border-radius:0.4px"></div><div style="position:absolute;left:5.6px;top:5.2px;width:11.5px;height:2.3px;background:#e6f5fc;border-radius:0.6px"></div></div>
<div style="position:absolute;left:625.8px;top:362px;width:19.800px;height:12.600px;border-radius:1.200px;background:#fff;box-shadow:inset 0 0 0 .6px #e3e3e3;overflow:hidden"><div style="position:absolute;left:2.6px;top:3.6px;width:4.2px;height:5px;background:#1d1d1d;border-radius:0.6px"></div><div style="position:absolute;left:8.2px;top:5.7px;width:8.5px;height:1.4px;background:#7b7b7b;border-radius:0.5px"></div></div>
<div style="position:absolute;left:649.6px;top:362px;width:19.800px;height:12.600px;border-radius:1.200px;background:#fff;box-shadow:inset 0 0 0 .6px #ececec;overflow:hidden"><div style="position:absolute;left:2.4px;top:6px;width:3.5px;height:0.9px;background:#8b94a8;border-radius:0px"></div><div style="position:absolute;left:6.8px;top:6px;width:3px;height:0.9px;background:#8b94a8;border-radius:0px"></div><div style="position:absolute;left:10.7px;top:6px;width:3px;height:0.9px;background:#8b94a8;border-radius:0px"></div><div style="position:absolute;left:14.5px;top:6px;width:2.8px;height:0.9px;background:#8b94a8;border-radius:0px"></div></div>
<div style="position:absolute;left:672.6px;top:362px;width:19.800px;height:12.600px;border-radius:1.200px;background:#5a30d6;overflow:hidden"><div style="position:absolute;left:0;top:3.9px;width:19.800px;text-align:center;font:normal 700 5px/1 'Liberation Sans',sans-serif;color:#efeaff;letter-spacing:0px;white-space:nowrap">Zelle</div></div>
<div style="position:absolute;left:696.3px;top:362px;width:19.800px;height:12.600px;border-radius:1.200px;background:#fff;box-shadow:inset 0 0 0 .6px #e6e6e6;overflow:hidden"><div style="position:absolute;left:3.2px;top:5.2px;width:13.5px;height:2px;background:#2c3a78;border-radius:0.5px"></div></div>
<span class="t" style="top:376.68px;font:normal 700 6.8px/1 'Liberation Sans',sans-serif;color:#151515;left:526.90px;letter-spacing:-0.286px;">Ship To:</span>
<span class="t" style="top:386.03px;font:normal 400 6.7px/1 'Liberation Sans',sans-serif;color:#151515;left:525.80px;letter-spacing:-0.182px;-webkit-text-stroke:.18px #151515;">A 101</span>
<span class="t" style="top:394.83px;font:normal 400 6.7px/1 'Liberation Sans',sans-serif;color:#151515;left:525.80px;letter-spacing:-0.019px;-webkit-text-stroke:.18px #151515;">Tirupati Complex</span>
<span class="t" style="top:403.73px;font:normal 400 6.7px/1 'Liberation Sans',sans-serif;color:#151515;left:525.80px;letter-spacing:-0.074px;-webkit-text-stroke:.18px #151515;">Ahmedabaad Gujarat 258741</span>
<span class="t" style="top:412.53px;font:normal 400 6.7px/1 'Liberation Sans',sans-serif;color:#151515;left:525.80px;letter-spacing:-0.063px;-webkit-text-stroke:.18px #151515;">India</span>
<span class="t" style="top:424.18px;font:normal 700 6.8px/1 'Liberation Sans',sans-serif;color:#151515;left:526.90px;letter-spacing:-0.206px;">Shipping Method:</span>
<span class="t" style="top:433.53px;font:normal 400 6.7px/1 'Liberation Sans',sans-serif;color:#151515;left:525.80px;letter-spacing:-0.087px;-webkit-text-stroke:.18px #151515;">Standard Ground</span>
<span class="t" style="top:403.62px;font:normal 400 6.5px/1 'Liberation Sans',sans-serif;color:#3c4660;left:431.30px;">n</span>
<span class="t" style="top:473.23px;font:normal 700 7.3px/1 'Liberation Sans',sans-serif;color:#151515;left:473.10px;letter-spacing:0.007px;">Moon Invoice - Easy Invoicing</span>
<div style="position:absolute;left:300px;top:484.2px;width:422.00px;height:15.00px;background:#d4d4d4"></div><div style="position:absolute;left:300px;top:483.57px;width:422.70px;height:1.25px;background:#2e2e2e"></div><div style="position:absolute;left:300px;top:498.57px;width:422.70px;height:1.25px;background:#2e2e2e"></div><div style="position:absolute;left:524.77px;top:484.2px;width:1.25px;height:15.00px;background:#2e2e2e"></div><div style="position:absolute;left:564.17px;top:484.2px;width:1.25px;height:15.00px;background:#2e2e2e"></div><div style="position:absolute;left:603.38px;top:484.2px;width:1.25px;height:15.00px;background:#2e2e2e"></div><div style="position:absolute;left:642.67px;top:484.2px;width:1.25px;height:15.00px;background:#2e2e2e"></div><div style="position:absolute;left:681.88px;top:484.2px;width:1.25px;height:15.00px;background:#2e2e2e"></div><span class="t" style="top:488.98px;font:normal 700 7px/1 'Liberation Sans',sans-serif;color:#151515;left:529.60px;letter-spacing:0.014px;">Quantity</span><span class="t" style="top:488.98px;font:normal 700 7px/1 'Liberation Sans',sans-serif;color:#151515;left:568.50px;letter-spacing:0.131px;">Unit Price</span><span class="t" style="top:488.98px;font:normal 700 7px/1 'Liberation Sans',sans-serif;color:#151515;left:607.70px;letter-spacing:0.168px;">Discount</span><span class="t" style="top:488.98px;font:normal 700 7px/1 'Liberation Sans',sans-serif;color:#151515;left:647.30px;letter-spacing:-0.130px;">GST</span><span class="t" style="top:488.98px;font:normal 700 7px/1 'Liberation Sans',sans-serif;color:#151515;left:690.67px;letter-spacing:0.274px;">Amount</span>
<span class="t" style="top:504.38px;font:normal 700 6.8px/1 'Liberation Sans',sans-serif;color:#151515;left:409.14px;">Produot</span>
<span class="t" style="top:504.38px;font:normal 700 6.8px/1 'Liberation Sans',sans-serif;color:#151515;left:529.30px;letter-spacing:-0.143px;">1.000</span><span class="t" style="top:504.38px;font:normal 700 6.8px/1 'Liberation Sans',sans-serif;color:#151515;left:568.40px;letter-spacing:-0.111px;">$150.00</span><span class="t" style="top:504.38px;font:normal 700 6.8px/1 'Liberation Sans',sans-serif;color:#151515;left:607.80px;letter-spacing:-0.203px;">$5.00</span><span class="t" style="top:504.38px;font:normal 700 6.8px/1 'Liberation Sans',sans-serif;color:#151515;left:647.10px;letter-spacing:-0.063px;">$7.50</span><span class="t" style="top:504.38px;font:normal 700 6.8px/1 'Liberation Sans',sans-serif;color:#151515;left:694.75px;letter-spacing:-0.154px;">$145.00</span>
<span class="t" style="top:519.28px;font:normal 400 6.6px/1 'Liberation Sans',sans-serif;color:#151515;left:348.71px;-webkit-text-stroke:.15px #151515;">Get paid faster with unlimited invoices for freelancers, small business owners, and contractors for 7 days.</span>
<div style="position:absolute;left:300px;top:527.90px;width:422.70px;height:1px;background:#333"></div>
<span class="t" style="top:533.28px;font:normal 700 6.8px/1 'Liberation Sans',sans-serif;color:#151515;left:408.98px;">Produot 1</span>
<span class="t" style="top:533.28px;font:normal 700 6.8px/1 'Liberation Sans',sans-serif;color:#151515;left:529.30px;letter-spacing:-0.143px;">1.000</span><span class="t" style="top:533.28px;font:normal 700 6.8px/1 'Liberation Sans',sans-serif;color:#151515;left:568.40px;letter-spacing:-0.111px;">$200.00</span><span class="t" style="top:533.28px;font:normal 700 6.8px/1 'Liberation Sans',sans-serif;color:#151515;left:607.80px;letter-spacing:-0.133px;">$10.00</span><span class="t" style="top:533.28px;font:normal 700 6.8px/1 'Liberation Sans',sans-serif;color:#151515;left:647.10px;letter-spacing:-0.133px;">$10.00</span><span class="t" style="top:533.28px;font:normal 700 6.8px/1 'Liberation Sans',sans-serif;color:#151515;left:694.75px;letter-spacing:-0.154px;">$190.00</span>
<span class="t" style="top:548.18px;font:normal 400 6.6px/1 'Liberation Sans',sans-serif;color:#151515;left:348.71px;-webkit-text-stroke:.15px #151515;">Get paid faster with unlimited invoices for freelancers, small business owners, and contractors for 7 days.</span>
<div style="position:absolute;left:300px;top:557.3px;width:422.00px;height:14.90px;background:#d4d4d4"></div><div style="position:absolute;left:300px;top:556.67px;width:422.70px;height:1.25px;background:#2e2e2e"></div><div style="position:absolute;left:300px;top:571.58px;width:422.70px;height:1.25px;background:#2e2e2e"></div><div style="position:absolute;left:524.77px;top:557.3px;width:1.25px;height:14.90px;background:#2e2e2e"></div><div style="position:absolute;left:564.17px;top:557.3px;width:1.25px;height:14.90px;background:#2e2e2e"></div><div style="position:absolute;left:603.38px;top:557.3px;width:1.25px;height:14.90px;background:#2e2e2e"></div><div style="position:absolute;left:642.67px;top:557.3px;width:1.25px;height:14.90px;background:#2e2e2e"></div><div style="position:absolute;left:681.88px;top:557.3px;width:1.25px;height:14.90px;background:#2e2e2e"></div><span class="t" style="top:562.03px;font:normal 700 7px/1 'Liberation Sans',sans-serif;color:#151515;left:529.60px;letter-spacing:0.014px;">Quantity</span><span class="t" style="top:562.03px;font:normal 700 7px/1 'Liberation Sans',sans-serif;color:#151515;left:568.50px;letter-spacing:0.053px;">Rate</span><span class="t" style="top:562.03px;font:normal 700 7px/1 'Liberation Sans',sans-serif;color:#151515;left:607.70px;letter-spacing:0.168px;">Discount</span><span class="t" style="top:562.03px;font:normal 700 7px/1 'Liberation Sans',sans-serif;color:#151515;left:647.30px;letter-spacing:-0.130px;">GST</span><span class="t" style="top:562.03px;font:normal 700 7px/1 'Liberation Sans',sans-serif;color:#151515;left:690.67px;letter-spacing:0.274px;">Amount</span>
<span class="t" style="top:575.68px;font:normal 700 6.8px/1 'Liberation Sans',sans-serif;color:#151515;left:407.75px;">Design Task</span>
<span class="t" style="top:575.68px;font:normal 700 6.8px/1 'Liberation Sans',sans-serif;color:#151515;left:529.30px;letter-spacing:-0.181px;">1</span><span class="t" style="top:575.68px;font:normal 700 6.8px/1 'Liberation Sans',sans-serif;color:#151515;left:568.40px;letter-spacing:-0.111px;">$120.00</span><span class="t" style="top:575.68px;font:normal 700 6.8px/1 'Liberation Sans',sans-serif;color:#151515;left:607.80px;letter-spacing:-0.314px;">5%</span><span class="t" style="top:575.68px;font:normal 700 6.8px/1 'Liberation Sans',sans-serif;color:#151515;left:647.10px;letter-spacing:-0.063px;">$6.00</span><span class="t" style="top:575.68px;font:normal 700 6.8px/1 'Liberation Sans',sans-serif;color:#151515;left:694.80px;letter-spacing:-0.100px;">$114.00</span>
<span class="t" style="top:584.18px;font:normal 400 6.6px/1 'Liberation Sans',sans-serif;color:#151515;left:386.31px;-webkit-text-stroke:.15px #151515;">Added new feature on Invoice, Estimate, Purchase Order, and Credit Note.</span>
<div style="position:absolute;left:300px;top:592.67px;width:422.70px;height:1.25px;background:#2e2e2e"></div>
<div style="position:absolute;left:524.98px;top:593.3px;width:1.25px;height:67.70px;background:#2e2e2e"></div>
<span class="t" style="top:604.08px;font:normal 400 6.6px/1 'Liberation Sans',sans-serif;color:#151515;left:403.99px;-webkit-text-stroke:.15px #151515;">Please consider as CR.</span>
<span class="t" style="top:622.98px;font:normal 400 6.6px/1 'Liberation Sans',sans-serif;color:#151515;left:428.40px;-webkit-text-stroke:.15px #151515;">2.Added round off feature.</span>
<span class="t" style="top:631.38px;font:normal 400 6.6px/1 'Liberation Sans',sans-serif;color:#151515;left:360.07px;-webkit-text-stroke:.15px #151515;">Thank you for the country.</span>
<span class="t" style="top:595.68px;font:normal 700 6.8px/1 'Liberation Sans',sans-serif;color:#151515;left:627.55px;letter-spacing:-0.252px;">Sub Total</span>
<span class="t" style="top:595.68px;font:normal 700 6.8px/1 'Liberation Sans',sans-serif;color:#151515;left:693.82px;">$449.00</span>
<span class="t" style="top:603.98px;font:normal 400 6.8px/1 'Liberation Sans',sans-serif;color:#151515;left:610.99px;letter-spacing:-0.112px;-webkit-text-stroke:.15px #151515;">Discount (10%)</span>
<span class="t" style="top:603.98px;font:normal 400 6.8px/1 'Liberation Sans',sans-serif;color:#151515;left:697.60px;-webkit-text-stroke:.15px #151515;">$44.90</span>
<span class="t" style="top:611.08px;font:normal 400 6.8px/1 'Liberation Sans',sans-serif;color:#151515;left:612.80px;letter-spacing:-0.100px;-webkit-text-stroke:.15px #151515;">Inline Discount</span>
<span class="t" style="top:611.08px;font:normal 400 6.8px/1 'Liberation Sans',sans-serif;color:#151515;left:698.10px;-webkit-text-stroke:.15px #151515;">$11.00</span>
<span class="t" style="top:618.88px;font:normal 400 6.8px/1 'Liberation Sans',sans-serif;color:#151515;left:614.99px;letter-spacing:-0.110px;-webkit-text-stroke:.15px #151515;">Shipping Cost</span>
<span class="t" style="top:618.88px;font:normal 400 6.8px/1 'Liberation Sans',sans-serif;color:#151515;left:693.82px;-webkit-text-stroke:.15px #151515;">$100.00</span>
<span class="t" style="top:625.68px;font:normal 400 6.8px/1 'Liberation Sans',sans-serif;color:#151515;left:608.06px;letter-spacing:-0.140px;-webkit-text-stroke:.15px #151515;">GST on $270.00</span>
<span class="t" style="top:625.68px;font:normal 400 6.8px/1 'Liberation Sans',sans-serif;color:#151515;left:697.60px;-webkit-text-stroke:.15px #151515;">$13.50</span>
<div style="position:absolute;left:526.2px;top:634.4px;width:195.80px;height:26.60px;background:#d4d4d4"></div>
<div style="position:absolute;left:525px;top:633.77px;width:197.70px;height:1.25px;background:#2e2e2e"></div>
<span class="t" style="top:637.68px;font:normal 700 6.8px/1 'Liberation Sans',sans-serif;color:#151515;left:640.61px;letter-spacing:-0.087px;">Total</span>
<span class="t" style="top:637.68px;font:normal 700 6.8px/1 'Liberation Sans',sans-serif;color:#151515;left:694.75px;letter-spacing:-0.154px;">$517.60</span>
<span class="t" style="top:645.08px;font:normal 700 6.8px/1 'Liberation Sans',sans-serif;color:#151515;left:615.46px;letter-spacing:-0.138px;">Amount Paid</span>
<span class="t" style="top:645.08px;font:normal 700 6.8px/1 'Liberation Sans',sans-serif;color:#151515;left:694.75px;letter-spacing:-0.154px;">$100.00</span>
<span class="t" style="top:652.78px;font:normal 700 6.8px/1 'Liberation Sans',sans-serif;color:#151515;left:617.13px;letter-spacing:-0.171px;">Amount Due</span>
<span class="t" style="top:652.78px;font:normal 700 6.8px/1 'Liberation Sans',sans-serif;color:#151515;left:694.75px;letter-spacing:-0.154px;">$417.60</span>
<div style="position:absolute;left:300px;top:660.58px;width:422.70px;height:1.25px;background:#2e2e2e"></div>
<div style="position:absolute;left:300px;top:711.98px;width:422.70px;height:1.25px;background:#2e2e2e"></div>
<svg style="position:absolute;left:503.900px;top:665px" width="44" height="44" viewBox="0 0 44 44"><path d="M0.00 0.00h12.32v1.81h-12.32zM14.08 0.00h8.80v1.81h-8.80zM24.64 0.00h3.52v1.81h-3.52zM31.68 0.00h12.32v1.81h-12.32zM0.00 1.76h1.76v1.81h-1.76zM10.56 1.76h1.76v1.81h-1.76zM14.08 1.76h5.28v1.81h-5.28zM21.12 1.76h3.52v1.81h-3.52zM26.40 1.76h3.52v1.81h-3.52zM31.68 1.76h1.76v1.81h-1.76zM42.24 1.76h1.76v1.81h-1.76zM0.00 3.52h1.76v1.81h-1.76zM3.52 3.52h5.28v1.81h-5.28zM10.56 3.52h1.76v1.81h-1.76zM19.36 3.52h1.76v1.81h-1.76zM26.40 3.52h1.76v1.81h-1.76zM31.68 3.52h1.76v1.81h-1.76zM35.20 3.52h5.28v1.81h-5.28zM42.24 3.52h1.76v1.81h-1.76zM0.00 5.28h1.76v1.81h-1.76zM3.52 5.28h5.28v1.81h-5.28zM10.56 5.28h1.76v1.81h-1.76zM15.84 5.28h5.28v1.81h-5.28zM22.88 5.28h3.52v1.81h-3.52zM31.68 5.28h1.76v1.81h-1.76zM35.20 5.28h5.28v1.81h-5.28zM42.24 5.28h1.76v1.81h-1.76zM0.00 7.04h1.76v1.81h-1.76zM3.52 7.04h5.28v1.81h-5.28zM10.56 7.04h1.76v1.81h-1.76zM14.08 7.04h1.76v1.81h-1.76zM26.40 7.04h1.76v1.81h-1.76zM31.68 7.04h1.76v1.81h-1.76zM35.20 7.04h5.28v1.81h-5.28zM42.24 7.04h1.76v1.81h-1.76zM0.00 8.80h1.76v1.81h-1.76zM10.56 8.80h1.76v1.81h-1.76zM14.08 8.80h3.52v1.81h-3.52zM21.12 8.80h8.80v1.81h-8.80zM31.68 8.80h1.76v1.81h-1.76zM42.24 8.80h1.76v1.81h-1.76zM0.00 10.56h12.32v1.81h-12.32zM21.12 10.56h5.28v1.81h-5.28zM31.68 10.56h12.32v1.81h-12.32zM17.60 12.32h1.76v1.81h-1.76zM24.64 12.32h5.28v1.81h-5.28zM0.00 14.08h1.76v1.81h-1.76zM8.80 14.08h3.52v1.81h-3.52zM14.08 14.08h1.76v1.81h-1.76zM19.36 14.08h3.52v1.81h-3.52zM26.40 14.08h5.28v1.81h-5.28zM35.20 14.08h1.76v1.81h-1.76zM42.24 14.08h1.76v1.81h-1.76zM1.76 15.84h3.52v1.81h-3.52zM12.32 15.84h1.76v1.81h-1.76zM17.60 15.84h7.04v1.81h-7.04zM26.40 15.84h5.28v1.81h-5.28zM33.44 15.84h3.52v1.81h-3.52zM40.48 15.84h1.76v1.81h-1.76zM5.28 17.60h7.04v1.81h-7.04zM14.08 17.60h3.52v1.81h-3.52zM21.12 17.60h1.76v1.81h-1.76zM28.16 17.60h1.76v1.81h-1.76zM31.68 17.60h3.52v1.81h-3.52zM0.00 19.36h1.76v1.81h-1.76zM8.80 19.36h1.76v1.81h-1.76zM12.32 19.36h1.76v1.81h-1.76zM21.12 19.36h1.76v1.81h-1.76zM28.16 19.36h10.56v1.81h-10.56zM0.00 21.12h1.76v1.81h-1.76zM5.28 21.12h1.76v1.81h-1.76zM10.56 21.12h1.76v1.81h-1.76zM14.08 21.12h3.52v1.81h-3.52zM21.12 21.12h3.52v1.81h-3.52zM26.40 21.12h5.28v1.81h-5.28zM33.44 21.12h1.76v1.81h-1.76zM36.96 21.12h5.28v1.81h-5.28zM1.76 22.88h1.76v1.81h-1.76zM8.80 22.88h5.28v1.81h-5.28zM15.84 22.88h5.28v1.81h-5.28zM24.64 22.88h3.52v1.81h-3.52zM33.44 22.88h3.52v1.81h-3.52zM38.72 22.88h3.52v1.81h-3.52zM3.52 24.64h1.76v1.81h-1.76zM7.04 24.64h1.76v1.81h-1.76zM10.56 24.64h3.52v1.81h-3.52zM17.60 24.64h3.52v1.81h-3.52zM22.88 24.64h12.32v1.81h-12.32zM36.96 24.64h1.76v1.81h-1.76zM40.48 24.64h3.52v1.81h-3.52zM0.00 26.40h5.28v1.81h-5.28zM8.80 26.40h3.52v1.81h-3.52zM14.08 26.40h1.76v1.81h-1.76zM17.60 26.40h3.52v1.81h-3.52zM22.88 26.40h1.76v1.81h-1.76zM29.92 26.40h1.76v1.81h-1.76zM36.96 26.40h7.04v1.81h-7.04zM0.00 28.16h1.76v1.81h-1.76zM3.52 28.16h5.28v1.81h-5.28zM14.08 28.16h12.32v1.81h-12.32zM28.16 28.16h15.84v1.81h-15.84zM14.08 29.92h5.28v1.81h-5.28zM28.16 29.92h1.76v1.81h-1.76zM35.20 29.92h1.76v1.81h-1.76zM40.48 29.92h1.76v1.81h-1.76zM0.00 31.68h12.32v1.81h-12.32zM24.64 31.68h5.28v1.81h-5.28zM31.68 31.68h1.76v1.81h-1.76zM35.20 31.68h1.76v1.81h-1.76zM42.24 31.68h1.76v1.81h-1.76zM0.00 33.44h1.76v1.81h-1.76zM10.56 33.44h1.76v1.81h-1.76zM14.08 33.44h5.28v1.81h-5.28zM21.12 33.44h1.76v1.81h-1.76zM26.40 33.44h3.52v1.81h-3.52zM35.20 33.44h1.76v1.81h-1.76zM38.72 33.44h5.28v1.81h-5.28zM0.00 35.20h1.76v1.81h-1.76zM3.52 35.20h5.28v1.81h-5.28zM10.56 35.20h1.76v1.81h-1.76zM15.84 35.20h1.76v1.81h-1.76zM19.36 35.20h5.28v1.81h-5.28zM26.40 35.20h10.56v1.81h-10.56zM38.72 35.20h5.28v1.81h-5.28zM0.00 36.96h1.76v1.81h-1.76zM3.52 36.96h5.28v1.81h-5.28zM10.56 36.96h1.76v1.81h-1.76zM19.36 36.96h1.76v1.81h-1.76zM22.88 36.96h15.84v1.81h-15.84zM40.48 36.96h1.76v1.81h-1.76zM0.00 38.72h1.76v1.81h-1.76zM3.52 38.72h5.28v1.81h-5.28zM10.56 38.72h1.76v1.81h-1.76zM17.60 38.72h8.80v1.81h-8.80zM28.16 38.72h1.76v1.81h-1.76zM31.68 38.72h3.52v1.81h-3.52zM36.96 38.72h3.52v1.81h-3.52zM0.00 40.48h1.76v1.81h-1.76zM10.56 40.48h1.76v1.81h-1.76zM14.08 40.48h1.76v1.81h-1.76zM19.36 40.48h3.52v1.81h-3.52zM24.64 40.48h7.04v1.81h-7.04zM35.20 40.48h1.76v1.81h-1.76zM38.72 40.48h1.76v1.81h-1.76zM42.24 40.48h1.76v1.81h-1.76zM0.00 42.24h12.32v1.81h-12.32zM14.08 42.24h14.08v1.81h-14.08zM33.44 42.24h3.52v1.81h-3.52zM38.72 42.24h5.28v1.81h-5.28z" fill="#111"/></svg>
<span class="t" style="top:767.52px;font:normal 400 6.3px/1 'Liberation Sans',sans-serif;color:#444;left:485.50px;letter-spacing:0.099px;">Created by</span>
<svg style="position:absolute;left:520.500px;top:766px" width="8" height="8" viewBox="0 0 8 8"><path d="M.600 .500 H5.600 L7.400 2.300 V7.500 L5.700 6 L4 7.500 L2.300 6 L.600 7.500 Z" fill="#1a6fe0"/></svg>
<span class="t" style="top:766.33px;font:normal 700 6.6px/1 'Liberation Sans',sans-serif;color:#1a6fe0;left:531.20px;letter-spacing:-0.663px;">moon</span>
<span class="t" style="top:766.33px;font:normal 700 6.6px/1 'Liberation Sans',sans-serif;color:#1c2a55;left:546.60px;letter-spacing:-0.648px;">invoice</span>
<div style="position:absolute;left:556px;top:773px;width:8.6px;height:0.8px;background:#8d93a8;border-radius:0px"></div>
<div style="position:absolute;left:233px;top:146.600px;width:198px;height:701.400px;border-radius:4px;background:#fff;box-shadow:0 2px 4px -1px rgba(0,0,0,.2),0 4px 5px 0 rgba(0,0,0,.14),0 1px 10px 0 rgba(0,0,0,.12)"></div>
<span class="t" style="top:160.73px;font:normal 400 14.3px/1 'Liberation Sans',sans-serif;color:#1e1e1e;left:247.70px;letter-spacing:-0.464px;">All</span>
<span class="t" style="top:204.57px;font:normal 400 14.3px/1 'Liberation Sans',sans-serif;color:#1e1e1e;left:247.70px;letter-spacing:-0.430px;">Invoice</span>
<span class="t" style="top:248.41px;font:normal 400 14.3px/1 'Liberation Sans',sans-serif;color:#1e1e1e;left:247.70px;letter-spacing:-0.149px;">Order</span>
<span class="t" style="top:292.25px;font:normal 400 14.3px/1 'Liberation Sans',sans-serif;color:#1e1e1e;left:247.70px;letter-spacing:-0.555px;">Sales Receipt</span>
<span class="t" style="top:336.09px;font:normal 400 14.3px/1 'Liberation Sans',sans-serif;color:#1e1e1e;left:247.70px;letter-spacing:-0.336px;">Proforma Invoice</span>
<span class="t" style="top:379.93px;font:normal 400 14.3px/1 'Liberation Sans',sans-serif;color:#1e1e1e;left:247.70px;letter-spacing:-0.051px;">Quote</span>
<span class="t" style="top:423.77px;font:normal 400 14.3px/1 'Liberation Sans',sans-serif;color:#1e1e1e;left:247.70px;letter-spacing:-0.443px;">Delivery Challan</span>
<span class="t" style="top:467.61px;font:normal 400 14.3px/1 'Liberation Sans',sans-serif;color:#1e1e1e;left:247.70px;letter-spacing:-0.520px;">Bill</span>
<span class="t" style="top:511.45px;font:normal 400 14.3px/1 'Liberation Sans',sans-serif;color:#1e1e1e;left:247.70px;letter-spacing:-0.423px;">Purchase Order</span>
<span class="t" style="top:555.29px;font:normal 400 14.3px/1 'Liberation Sans',sans-serif;color:#1e1e1e;left:247.70px;letter-spacing:-0.119px;">Credit Note</span>
<span class="t" style="top:599.13px;font:normal 400 14.3px/1 'Liberation Sans',sans-serif;color:#1e1e1e;left:247.70px;letter-spacing:-0.519px;">Payment Received</span>
<span class="t" style="top:642.97px;font:normal 400 14.3px/1 'Liberation Sans',sans-serif;color:#1e1e1e;left:247.70px;letter-spacing:-0.513px;">Payment Made</span>
<span class="t" style="top:686.81px;font:normal 400 14.3px/1 'Liberation Sans',sans-serif;color:#1e1e1e;left:247.70px;letter-spacing:-0.216px;">Debit Note</span>
<span class="t" style="top:730.65px;font:normal 400 14.3px/1 'Liberation Sans',sans-serif;color:#1e1e1e;left:247.70px;letter-spacing:-0.275px;">Statement</span>
<span class="t" style="top:774.49px;font:normal 400 14.3px/1 'Liberation Sans',sans-serif;color:#1e1e1e;left:247.70px;letter-spacing:-0.582px;">Packing Slip</span>
<span class="t" style="top:818.33px;font:normal 400 14.3px/1 'Liberation Sans',sans-serif;color:#1e1e1e;left:247.70px;letter-spacing:-0.293px;">Delivery Note</span>
<svg style="position:absolute;left:396px;top:161px" width="19" height="15" viewBox="396 161 19 15"><path d="M398.600 169 L402.700 173 L412 163.900" fill="none" stroke="#1a1a1a" stroke-width="1.900"/></svg>
</div>
<div class="layer" id="marks" style="z-index:4">
<div style="position:absolute;left:229px;top:49px;width:983px;height:808px;box-sizing:border-box;border:4px solid #ec1c24"></div>
<div style="position:absolute;left:231.300px;top:104px;width:53px;height:45.500px;box-sizing:border-box;border:4px solid #ec1c24"></div>
<div style="position:absolute;left:229px;top:231.400px;width:204px;height:49.400px;box-sizing:border-box;border:4px solid #ec1c24"></div>
</div>
</body></html>
